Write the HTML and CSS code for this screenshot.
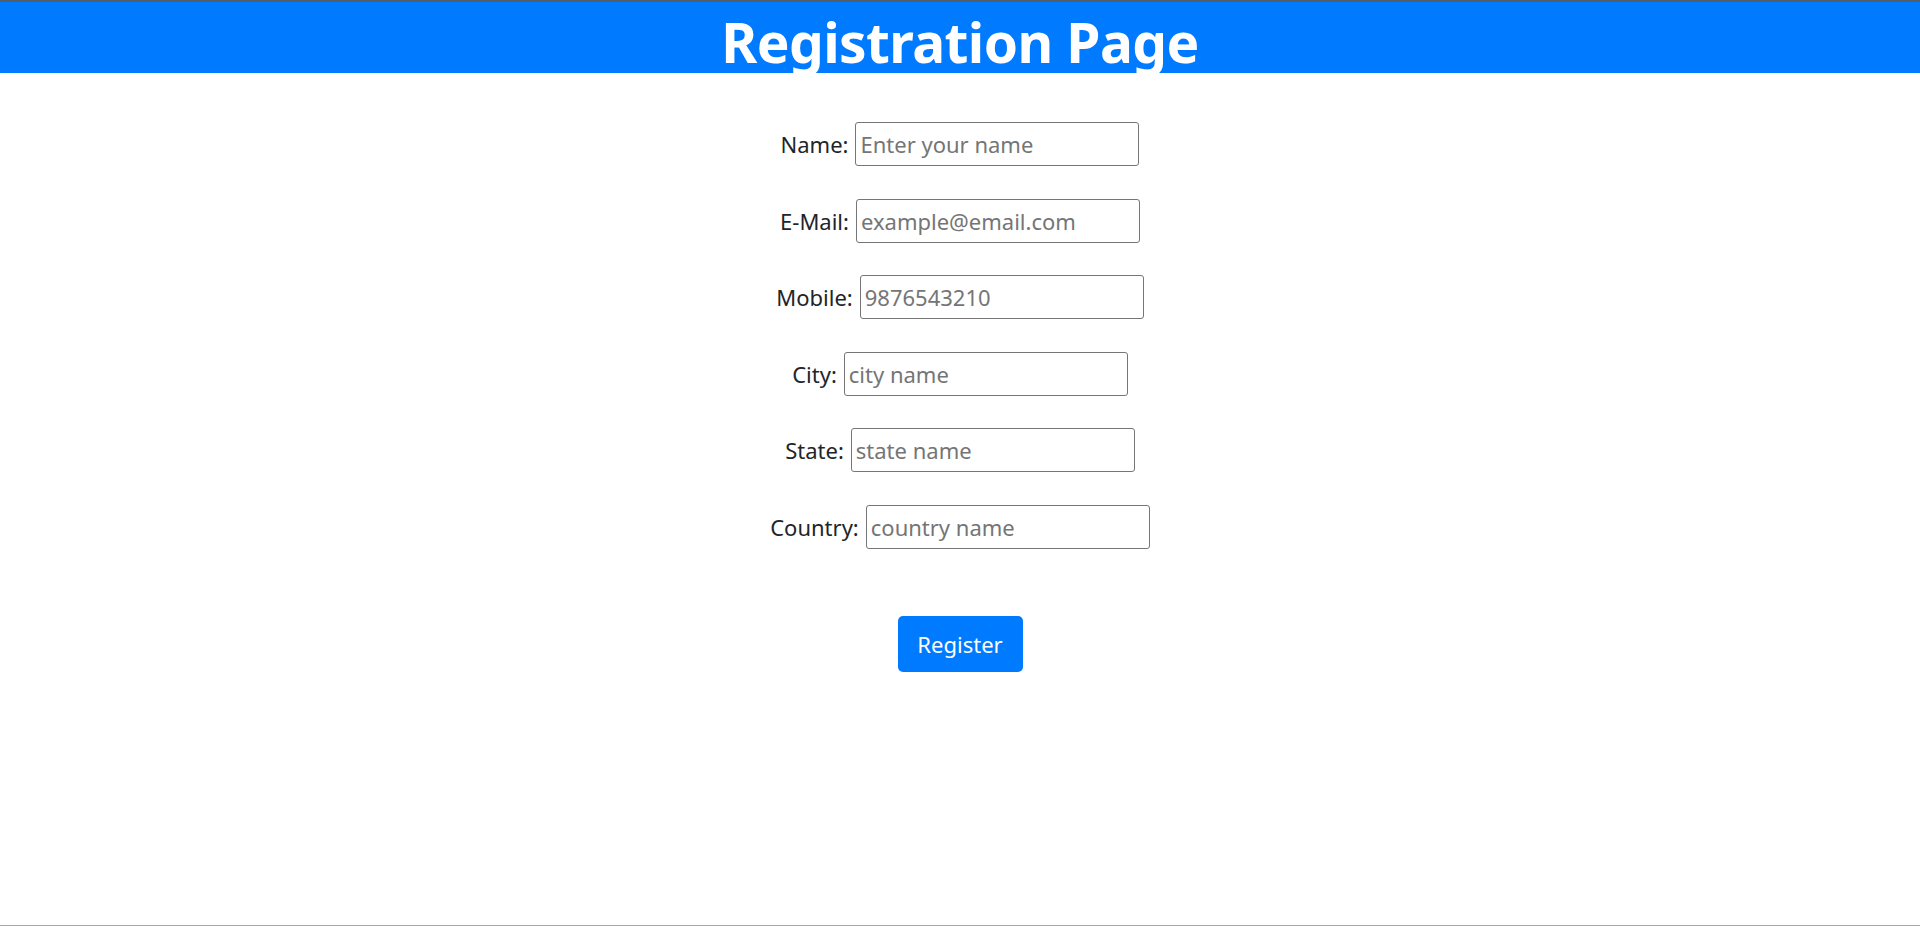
FILE: index.html
```html
<!DOCTYPE html>
<html lang="en">
<head>
<meta charset="utf-8">
<title>Registration Page</title>
<link rel="stylesheet" href="styles.css">
</head>
<body>
<div class="page">
  <header class="topbar">
    <h1 class="title">Registration Page</h1>
  </header>
  <form class="reg">
    <div class="row"><label for="name">Name:</label><input id="name" type="text" placeholder="Enter your name"></div>
    <div class="row"><label for="email">E-Mail:</label><input id="email" type="email" placeholder="example@email.com"></div>
    <div class="row"><label for="mobile">Mobile:</label><input id="mobile" type="text" placeholder="9876543210"></div>
    <div class="row"><label for="city">City:</label><input id="city" type="text" placeholder="city name"></div>
    <div class="row"><label for="state">State:</label><input id="state" type="text" placeholder="state name"></div>
    <div class="row"><label for="country">Country:</label><input id="country" type="text" placeholder="country name"></div>
    <button type="button" class="btn">Register</button>
  </form>
</div>
</body>
</html>
```
FILE: styles.css
```css
html, body {
  margin: 0;
  padding: 0;
  background: #ffffff;
}
body {
  font-family: "Noto Sans", "Open Sans", sans-serif;
}
.page {
  box-sizing: border-box;
  min-height: 926px;
  border-top: 2px solid #525d68;
  border-bottom: 1px solid #a8a8a8;
  display: flex;
  flex-direction: column;
}
.topbar {
  height: 71px;
  background: #007bff;
  display: flex;
  justify-content: center;
  align-items: flex-start;
}
.title {
  margin: 0;
  padding-top: 4px;
  font-size: 55px;
  line-height: 71px;
  font-weight: 700;
  letter-spacing: -0.6px;
  color: #ffffff;
  white-space: nowrap;
}
.reg {
  display: flex;
  flex-direction: column;
  align-items: center;
  padding-top: 49px;
  gap: 32.5px;
}
.row {
  display: flex;
  align-items: center;
  gap: 7px;
  font-size: 22px;
  color: #212529;
}
.row input {
  box-sizing: border-box;
  width: 284px;
  height: 44px;
  border: 1px solid #767676;
  border-radius: 3px;
  padding: 0 4px;
  font-family: inherit;
  font-size: 22px;
  color: #212529;
  background: #fff;
}
.row input::placeholder {
  color: #757575;
}
.btn {
  margin-top: 35px;
  width: 125px;
  height: 56px;
  border: none;
  border-radius: 5px;
  background: #007bff;
  color: #ffffff;
  font-family: inherit;
  font-size: 22px;
  padding: 0;
}
```
